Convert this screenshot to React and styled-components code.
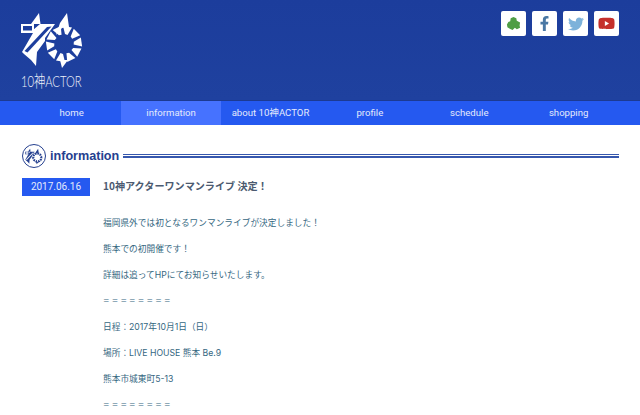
import React from "react";
import styled, { createGlobalStyle } from "styled-components";
import { FaFacebookF, FaTwitter, FaYoutube } from "react-icons/fa";

const Global = createGlobalStyle`
  html, body {
    margin: 0;
    padding: 0;
    height: 415px;
    overflow: hidden;
    background: #fff;
    font-family: "Inter", "Noto Sans CJK JP", sans-serif;
  }
  p, h1, h2 { margin: 0; }
`;

const Header = styled.header`
  height: 89px;
  padding: 11px 21px 0 21px;
  display: flex;
  justify-content: space-between;
  align-items: flex-start;
  background: linear-gradient(180deg, #1c3d9c 0%, #1f419f 100%);
  border-bottom: 1px solid #1c3a92;
`;

const Brand = styled.div`
  display: flex;
  flex-direction: column;
`;

const BrandName = styled.span`
  display: block;
  margin-top: 3px;
  font-family: "Lato", "Noto Sans CJK JP", sans-serif;
  font-size: 16px;
  line-height: 16px;
  font-weight: 300;
  color: #eef1fa;
  transform: scaleX(0.7);
  transform-origin: left center;
  white-space: nowrap;
`;

const Social = styled.div`
  display: flex;
  gap: 6px;
`;

const SocialButton = styled.a`
  width: 25px;
  height: 25px;
  display: flex;
  align-items: center;
  justify-content: center;
  background: #fff;
  border-radius: 2px;
  color: ${(p) => p.$color};
  font-size: ${(p) => p.$size}px;
`;

const Nav = styled.nav`
  height: 24px;
  background: #2559f0;
  padding-left: 22px;
  display: flex;
`;

const NavItem = styled.a`
  width: 99.4px;
  line-height: 24px;
  text-align: center;
  font-family: "Roboto", "Noto Sans CJK JP", sans-serif;
  font-size: 9.6px;
  color: #e4eafc;
  white-space: nowrap;
  background: ${(p) => (p.$active ? "#4672ff" : "transparent")};
`;

const Content = styled.main`
  padding: 19px 21px 0 22px;
`;

const SectionHead = styled.div`
  display: flex;
  align-items: center;
  height: 24px;
`;

const HeadIcon = styled.div`
  width: 22px;
  height: 22px;
  border: 1px solid #25408f;
  border-radius: 50%;
  display: flex;
  align-items: center;
  justify-content: center;
  flex: none;
`;

const SectionTitle = styled.h2`
  margin-left: 4px;
  font-family: "Liberation Sans", sans-serif;
  font-size: 12.6px;
  font-weight: 700;
  color: #25408f;
  white-space: nowrap;
`;

const DoubleRule = styled.div`
  flex: 1;
  height: 1px;
  margin-left: 4px;
  border-top: 1px solid #3657ad;
  border-bottom: 2px solid #3657ad;
`;

const Article = styled.article`
  display: grid;
  grid-template-columns: 68px 1fr;
  column-gap: 13px;
  margin-top: 10px;
`;

const DateBadge = styled.time`
  height: 18px;
  line-height: 17px;
  text-align: center;
  background: #2559f0;
  color: #e4eafc;
  font-family: "Roboto", sans-serif;
  font-size: 10px;
`;

const ArticleTitle = styled.h1`
  font-family: "Noto Sans CJK JP", sans-serif;
  font-size: 10.1px;
  line-height: 16px;
  font-weight: 700;
  color: #4b5a70;
  white-space: nowrap;
`;

const Body = styled.div`
  grid-column: 2;
  margin-top: 14px;
`;

const Line = styled.p`
  height: 26px;
  line-height: 26px;
  font-size: ${(p) => (p.$rule ? "6.5px" : "8.7px")};
  letter-spacing: ${(p) => (p.$rule ? "2.2px" : "0")};
  color: #35677f;
  white-space: nowrap;
`;

const bladeCount = 10;

// ロゴの図形
const LogoMark = ({ color, bg, width, height }) => (
  <svg width={width} height={height} viewBox="21 11 63 59">
    <g fill={color}>
      <path d="M39 13 L40.5 24 L31 24 Z" />
      <path d="M21 24 H34 V33 H21 Z M23 26 V30.5 H32 V26 Z" fillRule="evenodd" />
      <path d="M40 24 H55 L45 38 L45 41 L37 52 L36 66 L31 60 L24 54 L22 52 L33 33 V30 Z" />
      <path d="M67 13 L69 27 L62 28 L56 35 L60 23 Z" />
      <path d="M60 60 L68 60 L62 68 Z" />
      {Array.from({ length: bladeCount }).map((_, i) => (
        <path
          key={i}
          d="M63 26 L72 27.5 L67.5 35 L65 34 Z"
          transform={`rotate(${(360 / bladeCount) * i} 64 44)`}
        />
      ))}
    </g>
    <path d="M47 27 L51.5 26.5 L27.5 52.5 L24.5 51 Z" fill={bg} />
  </svg>
);

const GreenBlob = () => (
  <svg width="15" height="15" viewBox="0 0 16 16">
    <path
      fill="#4f9e45"
      d="M8 1 L11 2.5 L11.5 5 L15 7 L14.5 10 L15 12.5 L11.5 14 L9.5 12.5 L7 15 L4 13.5 L1.5 12 L1 9 L2.5 6.5 L4.5 5.5 L5 2.5 Z"
    />
  </svg>
);

const navItems = ["home", "information", "about 10神ACTOR", "profile", "schedule", "shopping"];

const lines = [
  "福岡県外では初となるワンマンライブが決定しました！",
  "熊本での初開催です！",
  "詳細は追ってHPにてお知らせいたします。",
  "＝＝＝＝＝＝＝＝",
  "日程：2017年10月1日（日）",
  "場所：LIVE HOUSE 熊本 Be.9",
  "熊本市城東町5-13",
  "＝＝＝＝＝＝＝＝",
];

const App = () => (
  <>
    <Global />
    <Header>
      <Brand>
        <LogoMark color="#ffffff" bg="#1d3e9d" width={63} height={59} />
        <BrandName>10神ACTOR</BrandName>
      </Brand>
      <Social>
        <SocialButton $color="#4f9e45" $size={15}>
          <GreenBlob />
        </SocialButton>
        <SocialButton $color="#4a78a4" $size={15}>
          <FaFacebookF />
        </SocialButton>
        <SocialButton $color="#7db2da" $size={16}>
          <FaTwitter />
        </SocialButton>
        <SocialButton $color="#c5302b" $size={17}>
          <FaYoutube />
        </SocialButton>
      </Social>
    </Header>
    <Nav>
      {navItems.map((item) => (
        <NavItem key={item} $active={item === "information"}>
          {item}
        </NavItem>
      ))}
    </Nav>
    <Content>
      <SectionHead>
        <HeadIcon>
          <LogoMark color="#25408f" bg="#ffffff" width={18} height={17} />
        </HeadIcon>
        <SectionTitle>information</SectionTitle>
        <DoubleRule />
      </SectionHead>
      <Article>
        <DateBadge>2017.06.16</DateBadge>
        <ArticleTitle>10神アクターワンマンライブ 決定！</ArticleTitle>
        <Body>
          {lines.map((line, i) => (
            <Line key={i} $rule={line.startsWith("＝")}>
              {line}
            </Line>
          ))}
        </Body>
      </Article>
    </Content>
  </>
);

export default App;
